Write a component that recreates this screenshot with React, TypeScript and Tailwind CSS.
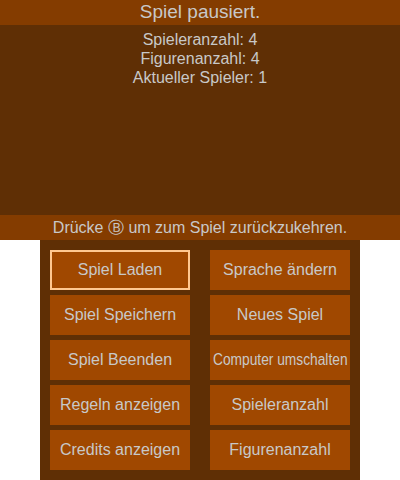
const LEFT = ['Spiel Laden', 'Spiel Speichern', 'Spiel Beenden', 'Regeln anzeigen', 'Credits anzeigen'];
const RIGHT = ['Sprache ändern', 'Neues Spiel', 'Computer umschalten', 'Spieleranzahl', 'Figurenanzahl'];

function MenuButton({ label, selected }: { label: string; selected?: boolean }) {
  // long labels get squeezed horizontally to fit, like the console does
  const squeeze = label.length > 17;
  return (
    <button
      className={
        selected
          ? 'h-10 w-full flex items-center justify-center bg-[#a04800] border-2 border-[#ffc890] text-[16px] text-[#c8c8c8] whitespace-nowrap'
          : 'h-10 w-full flex items-center justify-center bg-[#a04800] text-[16px] text-[#c8c8c8] whitespace-nowrap'
      }
    >
      <span className={squeeze ? 'inline-block scale-x-[0.86]' : 'inline-block'}>{label}</span>
    </button>
  );
}

export default function App() {
  return (
    <div className="w-[400px] h-[480px] bg-white font-['Liberation_Sans',sans-serif] text-[#c8c8c8]">
      {/* Top screen */}
      <div className="h-[240px] flex flex-col bg-[#5f2f05]">
        <div className="h-[25px] bg-[#843c00] flex items-center justify-center text-[19px]">
          Spiel pausiert.
        </div>
        <div className="flex-1 flex flex-col items-center pt-[5px] text-[16px] leading-[19px]">
          <p>Spieleranzahl: 4</p>
          <p>Figurenanzahl: 4</p>
          <p>Aktueller Spieler: 1</p>
        </div>
        <div className="h-[25px] bg-[#843c00] flex items-center justify-center text-[16px]">
          Drücke Ⓑ um zum Spiel zurückzukehren.
        </div>
      </div>

      {/* Bottom screen */}
      <div className="w-[320px] h-[240px] mx-auto bg-[#5f2f05] p-[10px] grid grid-cols-2 gap-x-5 gap-y-[5px]">
        {LEFT.map((l, i) => (
          <div key={l} className="contents">
            <MenuButton label={l} selected={i === 0} />
            <MenuButton label={RIGHT[i]} />
          </div>
        ))}
      </div>
    </div>
  );
}
